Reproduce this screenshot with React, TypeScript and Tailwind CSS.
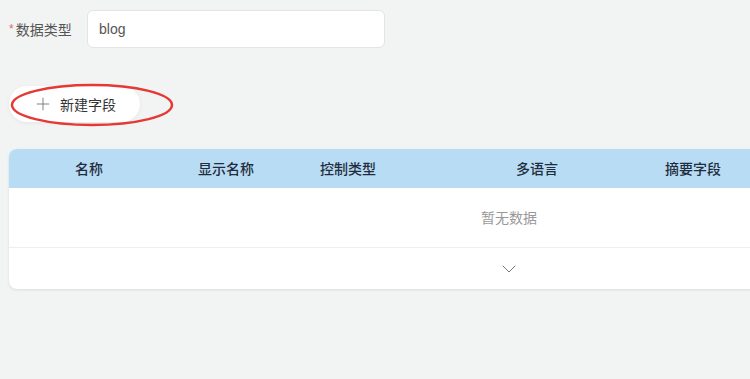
import { Plus, ChevronDown } from 'lucide-react';

const columns = [
  { title: '名称', width: 'w-[160px]' },
  { title: '显示名称', width: 'w-[114px]' },
  { title: '控制类型', width: 'w-[130px]' },
  { title: '多语言', width: 'w-[248px]' },
  { title: '摘要字段', width: 'w-[64px]' },
];

const App = () => {
  return (
    <div
      className="min-h-[379px] w-[750px] overflow-hidden bg-[#f2f3f3] pt-[10px] pl-[9px]"
      style={{ fontFamily: '"Noto Sans CJK SC", "Liberation Sans", sans-serif' }}
    >
      {/* Form row */}
      <div className="flex items-center">
        <label className="flex w-[78px] items-center text-[14px] text-[#555]">
          <span className="mr-[2px] font-['Liberation_Sans',sans-serif] text-[12px] text-[#e06b6b]">*</span>
          数据类型
        </label>
        <div className="flex h-[38px] w-[298px] items-center rounded-[6px] border border-[#e2e4e6] bg-white px-[11px] font-['Liberation_Sans',sans-serif] text-[14px] text-[#555]">
          blog
        </div>
      </div>

      {/* New field button */}
      <div className="relative mt-[38px] h-[38px] w-[170px]">
        <button className="flex h-[36px] w-[131px] items-center rounded-full bg-white pl-[24px] text-[14px] text-[#333] shadow-[0_1px_4px_rgba(0,0,0,0.06)]">
          <Plus className="mr-[7px] h-[20px] w-[20px] text-[#777]" strokeWidth={1.1} />
          新建字段
        </button>
        <svg className="absolute -top-[3px] left-0 h-[44px] w-[168px]" viewBox="0 0 168 44">
          <ellipse cx="83" cy="22" rx="80" ry="20" fill="none" stroke="#e53935" strokeWidth="2.5" />
        </svg>
      </div>

      {/* Table */}
      <div className="mt-[25px] w-[1000px] overflow-hidden rounded-[8px] bg-white shadow-[0_1px_3px_rgba(0,0,0,0.1)]">
        <div className="flex h-[39px] items-center bg-[#b9dcf5] text-[14px] font-medium text-[#1f2d3d]">
          {columns.map((col) => (
            <div key={col.title} className={`${col.width} text-center`}>
              {col.title}
            </div>
          ))}
        </div>
        <div className="flex h-[60px] items-center justify-center border-b border-[#eeeeee] text-[14px] text-[#999]">
          暂无数据
        </div>
        <div className="flex h-[41px] items-center justify-center">
          <ChevronDown className="h-[24px] w-[24px] text-[#777]" strokeWidth={1} />
        </div>
      </div>
    </div>
  );
};

export default App;
